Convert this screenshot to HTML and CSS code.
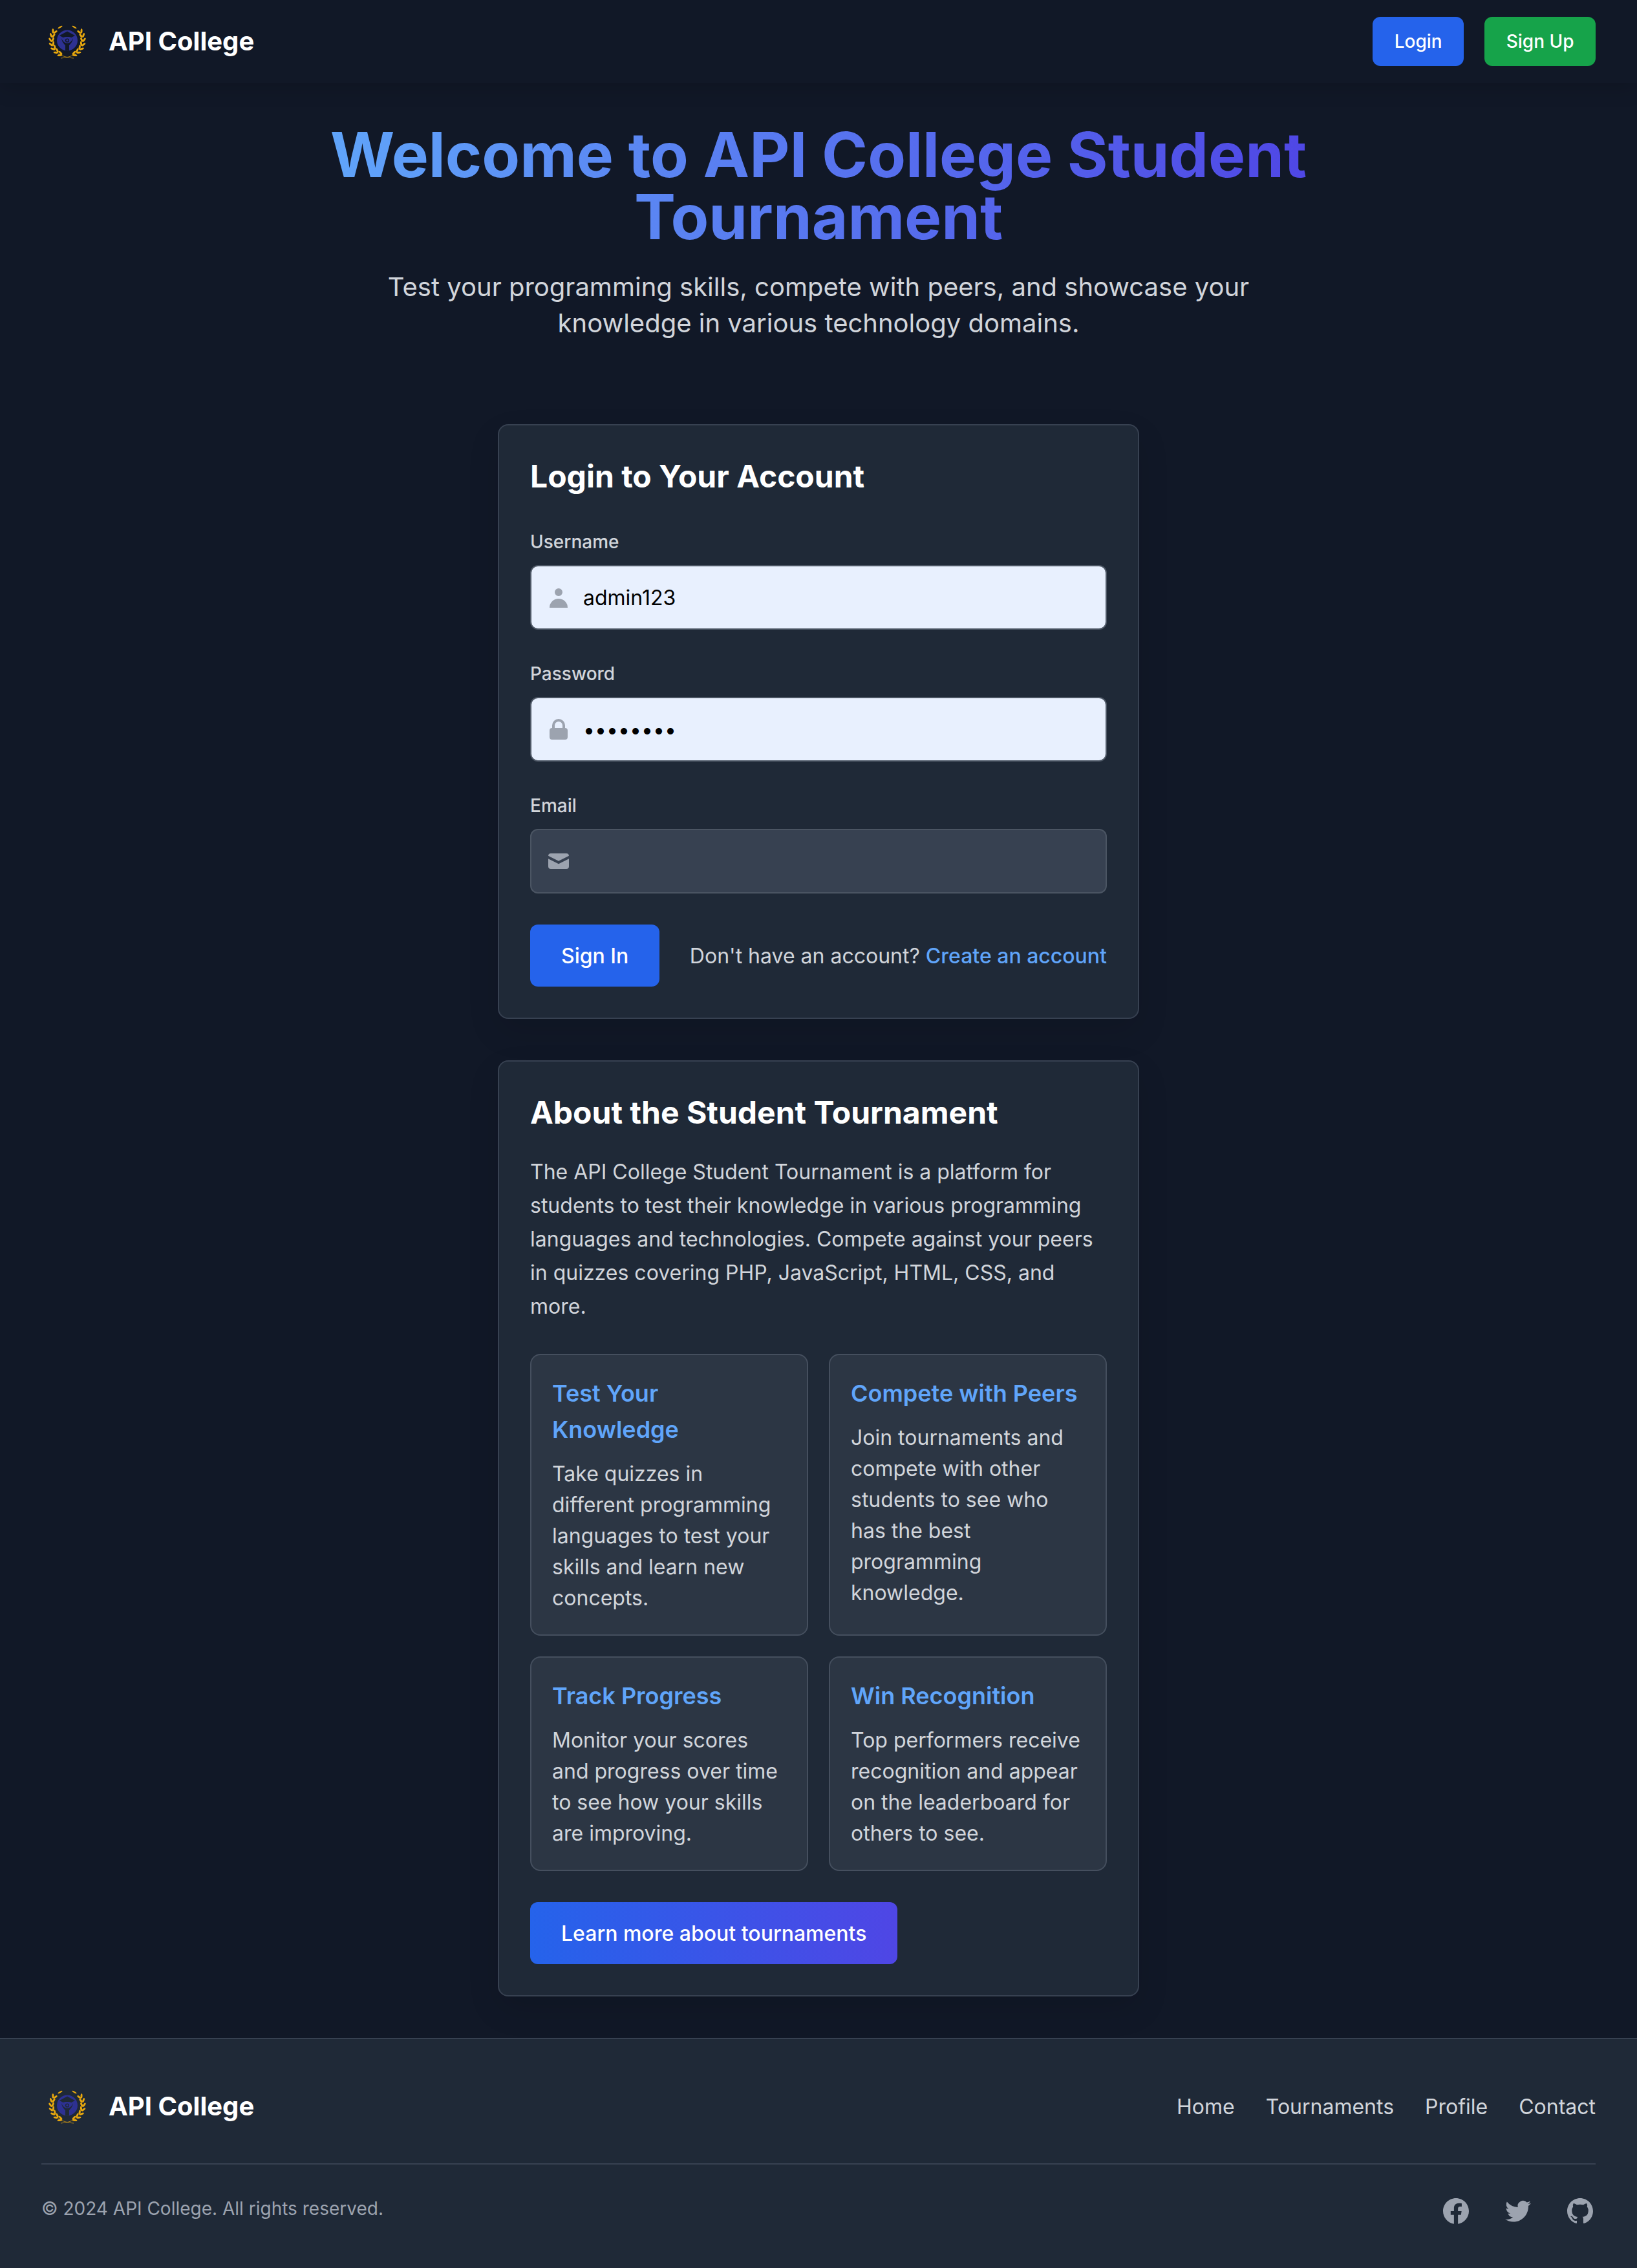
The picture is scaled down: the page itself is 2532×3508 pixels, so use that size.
FILE: index.html
```html
<!DOCTYPE html>
<html lang="en">
<head>
    <meta charset="UTF-8">
    <meta name="viewport" content="width=device-width, initial-scale=1.0">
    <title>API College Student Tournament</title>
    <link rel="stylesheet" href="styles.css">
</head>
<body>
    <svg class="sprites" width="0" height="0">
        <defs>
            <g id="leaf-pair">
                <ellipse cx="37" cy="64" rx="3.7" ry="1.5" transform="rotate(-28 37 64)"/>
                <ellipse cx="37" cy="60" rx="3.7" ry="1.5" transform="rotate(28 37 60)"/>
            </g>
        </defs>
        <symbol id="college-logo" viewBox="0 0 80 80">
            <g id="laurel" fill="#e8a80e">
                <path d="M50 66 C42 65.5 32 63 26 59" fill="none" stroke="#e8a80e" stroke-width="0.7"/>
                <use href="#leaf-pair" transform="rotate(20 40 38)"/>
                <use href="#leaf-pair" transform="rotate(36 40 38)"/>
                <use href="#leaf-pair" transform="rotate(52 40 38)"/>
                <use href="#leaf-pair" transform="rotate(68 40 38)"/>
                <use href="#leaf-pair" transform="rotate(84 40 38)"/>
                <use href="#leaf-pair" transform="rotate(100 40 38)"/>
                <use href="#leaf-pair" transform="rotate(116 40 38)"/>
                <ellipse cx="29" cy="18" rx="4" ry="1.1" transform="rotate(-30 29 18)"/>
            </g>
            <use href="#laurel" transform="translate(80 0) scale(-1 1)"/>
            <circle cx="40" cy="38.5" r="16" fill="#2d3192"/>
            <path d="M40 24.5 L52 31 L46.5 34 C44 32.5 36 32.5 33.5 34 L28 31z" fill="currentColor"/>
            <path d="M31 35 C32 42 36 44.5 37 46 L37 54.5 L43 54.5 L43 46 C44 44.5 48 42 49 35 C47 40 44 42.5 40 43 C36 42.5 33 40 31 35z" fill="currentColor"/>
            <circle cx="40" cy="38.5" r="2.4" fill="none" stroke="currentColor" stroke-width="1.4"/>
        </symbol>
    </svg>

    <nav class="navbar">
        <a class="brand">
            <svg class="brand-logo"><use href="#college-logo"/></svg>
            <span class="brand-name">API College</span>
        </a>
        <div class="nav-actions">
            <button class="btn-small btn-blue">Login</button>
            <button class="btn-small btn-green">Sign Up</button>
        </div>
    </nav>

    <header class="hero">
        <h1 class="hero-title">Welcome to API College Student Tournament</h1>
        <p class="hero-text">Test your programming skills, compete with peers, and showcase your knowledge in various technology domains.</p>
    </header>

    <main class="content">
        <section class="card">
            <h2 class="card-title">Login to Your Account</h2>
            <form>
                <div class="field">
                    <label class="field-label" for="username">Username</label>
                    <div class="input-wrap">
                        <svg class="input-icon" viewBox="0 0 20 20"><path d="M10 9a3 3 0 100-6 3 3 0 000 6zm-7 9a7 7 0 1114 0H3z"/></svg>
                        <input class="input input-filled" type="text" id="username" value="admin123">
                    </div>
                </div>
                <div class="field">
                    <label class="field-label" for="password">Password</label>
                    <div class="input-wrap">
                        <svg class="input-icon" viewBox="0 0 20 20"><path fill-rule="evenodd" d="M5 9V7a5 5 0 0110 0v2a2 2 0 012 2v5a2 2 0 01-2 2H5a2 2 0 01-2-2v-5a2 2 0 012-2zm8-2v2H7V7a3 3 0 016 0z"/></svg>
                        <input class="input input-filled" type="password" id="password" value="password">
                    </div>
                </div>
                <div class="field">
                    <label class="field-label" for="email">Email</label>
                    <div class="input-wrap">
                        <svg class="input-icon" viewBox="0 0 20 20"><path d="M2.003 5.884L10 9.882l7.997-3.998A2 2 0 0016 4H4a2 2 0 00-1.997 1.884z"/><path d="M18 8.118l-8 4-8-4V14a2 2 0 002 2h12a2 2 0 002-2V8.118z"/></svg>
                        <input class="input" type="email" id="email">
                    </div>
                </div>
                <div class="form-footer">
                    <button type="button" class="btn btn-blue">Sign In</button>
                    <p class="form-note">Don't have an account? <a class="link">Create an account</a></p>
                </div>
            </form>
        </section>

        <section class="card">
            <h2 class="card-title card-title-tight">About the Student Tournament</h2>
            <p class="about-text">The API College Student Tournament is a platform for students to test their knowledge in various programming languages and technologies. Compete against your peers in quizzes covering PHP, JavaScript, HTML, CSS, and more.</p>
            <div class="features">
                <div class="feature">
                    <h3 class="feature-title">Test Your Knowledge</h3>
                    <p class="feature-text">Take quizzes in different programming languages to test your skills and learn new concepts.</p>
                </div>
                <div class="feature">
                    <h3 class="feature-title">Compete with Peers</h3>
                    <p class="feature-text">Join tournaments and compete with other students to see who has the best programming knowledge.</p>
                </div>
                <div class="feature">
                    <h3 class="feature-title">Track Progress</h3>
                    <p class="feature-text">Monitor your scores and progress over time to see how your skills are improving.</p>
                </div>
                <div class="feature">
                    <h3 class="feature-title">Win Recognition</h3>
                    <p class="feature-text">Top performers receive recognition and appear on the leaderboard for others to see.</p>
                </div>
            </div>
            <button class="btn btn-gradient">Learn more about tournaments</button>
        </section>
    </main>

    <footer class="footer">
        <div class="footer-top">
            <a class="brand">
                <svg class="brand-logo"><use href="#college-logo"/></svg>
                <span class="brand-name">API College</span>
            </a>
            <div class="footer-links">
                <a>Home</a>
                <a>Tournaments</a>
                <a>Profile</a>
                <a>Contact</a>
            </div>
        </div>
        <div class="footer-bottom">
            <p class="copyright">© 2024 API College. All rights reserved.</p>
            <div class="socials">
                <svg class="social-icon" viewBox="0 0 24 24"><path d="M22 12c0-5.523-4.477-10-10-10S2 6.477 2 12c0 4.991 3.657 9.128 8.438 9.878v-6.987h-2.54V12h2.54V9.797c0-2.506 1.492-3.89 3.777-3.89 1.094 0 2.238.195 2.238.195v2.46h-1.26c-1.243 0-1.63.771-1.63 1.562V12h2.773l-.443 2.89h-2.33v6.988C18.343 21.128 22 16.991 22 12z"/></svg>
                <svg class="social-icon" viewBox="0 0 24 24"><path d="M8.29 20.251c7.547 0 11.675-6.253 11.675-11.675 0-.178 0-.355-.012-.53A8.348 8.348 0 0022 5.92a8.19 8.19 0 01-2.357.646 4.118 4.118 0 001.804-2.27 8.224 8.224 0 01-2.605.996 4.107 4.107 0 00-6.993 3.743 11.65 11.65 0 01-8.457-4.287 4.106 4.106 0 001.27 5.477A4.072 4.072 0 012.8 9.713v.052a4.105 4.105 0 003.292 4.022 4.095 4.095 0 01-1.853.07 4.108 4.108 0 003.834 2.85A8.233 8.233 0 012 18.407a11.616 11.616 0 006.29 1.84"/></svg>
                <svg class="social-icon" viewBox="0 0 24 24"><path fill-rule="evenodd" d="M12 2C6.477 2 2 6.484 2 12.017c0 4.425 2.865 8.18 6.839 9.504.5.092.682-.217.682-.483 0-.237-.008-.868-.013-1.703-2.782.605-3.369-1.343-3.369-1.343-.454-1.158-1.11-1.466-1.11-1.466-.908-.62.069-.608.069-.608 1.003.07 1.531 1.032 1.531 1.032.892 1.53 2.341 1.088 2.91.832.092-.647.35-1.088.636-1.338-2.22-.253-4.555-1.113-4.555-4.951 0-1.093.39-1.988 1.029-2.688-.103-.253-.446-1.272.098-2.65 0 0 .84-.27 2.75 1.026A9.564 9.564 0 0112 6.844c.85.004 1.705.115 2.504.337 1.909-1.296 2.747-1.027 2.747-1.027.546 1.379.202 2.398.1 2.651.64.7 1.028 1.595 1.028 2.688 0 3.848-2.339 4.695-4.566 4.943.359.309.678.92.678 1.855 0 1.338-.012 2.419-.022 2.747 0 .268.18.58.688.482A10.019 10.019 0 0022 12.017C22 6.484 17.522 2 12 2z"/></svg>
            </div>
        </div>
    </footer>
</body>
</html>
```

FILE: styles.css
```css
* {
    box-sizing: border-box;
}
body {
    margin: 0;
    background: #111827;
    color: #ffffff;
    font-family: Inter, "Liberation Sans", sans-serif;
    font-size: 32px;
    line-height: 48px;
}
h1, h2, h3, p {
    margin: 0;
}
.sprites {
    position: absolute;
}

.navbar {
    display: flex;
    justify-content: space-between;
    align-items: center;
    height: 128px;
    padding: 0 64px;
    background: #111827;
    box-shadow: 0 8px 30px rgba(0, 0, 0, 0.15);
}
.brand {
    display: flex;
    align-items: center;
    gap: 24px;
    color: #111827;
}
.footer .brand {
    color: #1f2937;
}
.brand-logo {
    width: 80px;
    height: 80px;
}
.brand-name {
    color: #ffffff;
    font-size: 40px;
    font-weight: 700;
    line-height: 56px;
}
.nav-actions {
    display: flex;
    gap: 32px;
}

button {
    border: 0;
    color: #ffffff;
    font-family: inherit;
    cursor: pointer;
}
.btn-small {
    height: 76px;
    padding: 0 33.5px;
    border-radius: 12px;
    font-size: 28px;
    font-weight: 500;
}
.btn {
    height: 96px;
    padding: 0 48px;
    border-radius: 12px;
    font-size: 32px;
    font-weight: 500;
}
.btn-blue {
    background: #2563eb;
}
.btn-green {
    background: #16a34a;
}
.btn-gradient {
    background: linear-gradient(90deg, #2563eb, #4f46e5);
}

.hero {
    width: 1600px;
    margin: 0 auto;
    padding-top: 63px;
    text-align: center;
}
.hero-title {
    width: 1536px;
    margin: 0 auto 33px;
    background: linear-gradient(90deg, #60a5fa, #4f46e5);
    -webkit-background-clip: text;
    background-clip: text;
    color: transparent;
    font-size: 96px;
    font-weight: 700;
    line-height: 96px;
}
.hero-text {
    width: 1344px;
    margin: 0 auto;
    color: #d1d5db;
    font-size: 40px;
    line-height: 56px;
}

.content {
    display: flex;
    flex-direction: column;
    align-items: center;
    gap: 64px;
    padding: 128px 0 64px;
}
.card {
    width: 992px;
    padding: 48px;
    border: 2px solid #374151;
    border-radius: 16px;
    background: #1f2937;
    box-shadow: 0 20px 50px rgba(0, 0, 0, 0.1);
}
.card-title {
    margin-bottom: 50px;
    font-size: 48px;
    font-weight: 700;
    line-height: 62px;
}
.card-title-tight {
    margin-bottom: 34px;
}

.field {
    margin-bottom: 48px;
}
.field-label {
    display: block;
    margin-bottom: 16px;
    color: #d1d5db;
    font-size: 28px;
    font-weight: 500;
    line-height: 40px;
}
.input-wrap {
    position: relative;
}
.input-icon {
    position: absolute;
    top: 30px;
    left: 24px;
    width: 40px;
    height: 40px;
    fill: #9ca3af;
}
.input {
    display: block;
    width: 100%;
    height: 100px;
    padding: 24px 24px 24px 80px;
    border: 2px solid #4b5563;
    border-radius: 12px;
    outline: none;
    background: #374151;
    color: #ffffff;
    font-family: inherit;
    font-size: 32px;
    line-height: 48px;
}
.input-filled {
    background: #e8f0fe;
    color: #000000;
}
.form-footer {
    display: flex;
    justify-content: space-between;
    align-items: center;
}
.form-note {
    padding-top: 2px;
    color: #d1d5db;
}
.link {
    color: #60a5fa;
    font-weight: 500;
}

.about-text {
    margin-bottom: 47px;
    padding-top: 1px;
    color: #d1d5db;
    line-height: 52px;
}
.features {
    display: grid;
    grid-template-columns: 1fr 1fr;
    gap: 32px;
    margin-bottom: 48px;
}
.feature {
    padding: 32px;
    border: 2px solid #454f5e;
    border-radius: 16px;
    background: #2c3644;
}
.feature-title {
    margin: -1px 0 16px;
    color: #60a5fa;
    font-size: 36px;
    font-weight: 600;
    line-height: 56px;
}
.feature-text {
    padding-top: 1px;
    color: #d1d5db;
}

.footer {
    padding: 64px;
    border-top: 2px solid #374151;
    background: #1f2937;
}
.footer-top {
    display: flex;
    justify-content: space-between;
    align-items: center;
    padding-bottom: 48px;
    border-bottom: 2px solid #374151;
}
.footer-links {
    display: flex;
    gap: 48px;
    padding-top: 2px;
    color: #d1d5db;
}
.footer-bottom {
    display: flex;
    justify-content: space-between;
    align-items: flex-start;
    padding-top: 48px;
}
.copyright {
    color: #9ca3af;
    font-size: 28px;
    line-height: 40px;
}
.socials {
    display: flex;
    gap: 48px;
}
.social-icon {
    width: 48px;
    height: 48px;
    fill: #9ca3af;
}
```
